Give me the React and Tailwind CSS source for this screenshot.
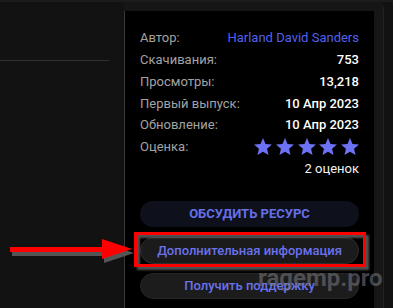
import React from "react";

function Star() {
  return (
    <svg width="18" height="17" viewBox="2 2 20 19" className="block">
      <path
        d="M12 17.27L18.18 21l-1.64-7.03L22 9.24l-7.19-.61L12 2 9.19 8.63 2 9.24l5.46 4.73L5.82 21z"
        fill="#6d71f3"
      />
    </svg>
  );
}

function Row({ label, children }) {
  return (
    <div className="flex items-center justify-between h-[21.8px]">
      <span className="text-[#a3a3a3]">{label}</span>
      {children}
    </div>
  );
}

export default function App() {
  return (
    <div className="relative w-[393px] h-[308px] overflow-hidden bg-[#121212] font-['Roboto',sans-serif] text-[13px]">
      <div className="h-[2px] bg-[#1c1c1c]" />
      <div className="flex h-[306px]">
        <div className="w-[124px] pt-[58px]">
          <div className="w-[109px] h-px bg-[#313131]" />
        </div>
        <div className="w-[260px] bg-[#161616] rounded-tr-[8px] border-r border-[#232323] pt-[9px] pr-[9px]">
          <div className="h-full bg-black border-l border-[#383838] px-[15px] pt-[16px]">
            <Row label="Автор:">
              <span className="text-[#5361ee]">Harland David Sanders</span>
            </Row>
            <Row label="Скачивания:">
              <span className="text-white font-medium">753</span>
            </Row>
            <Row label="Просмотры:">
              <span className="text-white font-medium">13,218</span>
            </Row>
            <Row label="Первый выпуск:">
              <span className="text-white font-medium">10 Апр 2023</span>
            </Row>
            <Row label="Обновление:">
              <span className="text-white font-medium">10 Апр 2023</span>
            </Row>
            <Row label="Оценка:">
              <div className="flex gap-[3.7px]">
                <Star />
                <Star />
                <Star />
                <Star />
                <Star />
              </div>
            </Row>
            <div className="flex justify-end items-center h-[21.8px] text-[#f2f2f2]">2 оценок</div>
            <div className="mt-[21.4px] flex flex-col gap-[10px]">
              <div className="h-[26px] rounded-full bg-[#0e101c] flex items-center justify-center font-bold text-[#6670e6]">
                ОБСУДИТЬ РЕСУРС
              </div>
              <div className="h-[27px] rounded-full bg-[#1b1b1b] border border-[#2e2e2e] flex items-center justify-center font-medium text-[#6a72ea]">
                Дополнительная информация
              </div>
              <div className="-mt-[1px] h-[26px] rounded-full bg-[#1c1c1c] border border-[#262626] flex items-center justify-center font-medium text-[#6a72ea]">
                Получить поддержку
              </div>
            </div>
          </div>
        </div>
      </div>

      {/* watermark */}
      <div className="absolute left-[258px] top-[266px] text-[24px] leading-none font-bold text-[rgba(130,130,140,0.5)] pointer-events-none">
        ragemp.pro
      </div>

      {/* red highlight box */}
      <div className="absolute left-[134px] top-[232px] w-[232px] h-[35px] border-[3px] border-[#ff0000] shadow-[3px_3px_2px_rgba(90,90,90,0.9),inset_3px_3px_2px_rgba(90,90,90,0.9)]" />

      {/* arrow */}
      <svg className="absolute left-0 top-[230px]" width="140" height="40" viewBox="0 230 140 40">
        <g fill="#555" transform="translate(2 4)">
          <rect x="10" y="247" width="94" height="5" />
          <polygon points="102,239 102,259 132,249" />
        </g>
        <g fill="#ff0000">
          <rect x="10" y="247" width="94" height="5" />
          <polygon points="102,239 102,259 132,249" />
        </g>
      </svg>
    </div>
  );
}
